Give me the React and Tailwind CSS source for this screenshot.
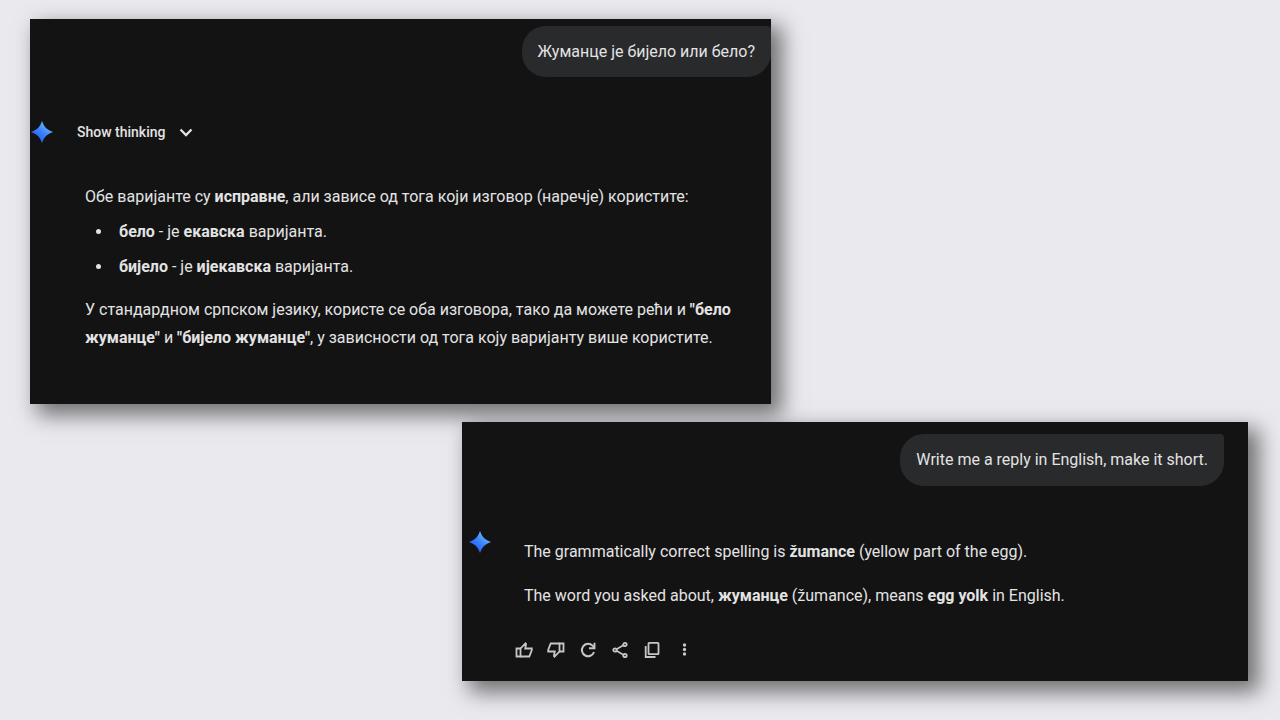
import { useState } from 'react'

function Icon({ children, className = 'w-[18px] h-[18px]' }) {
  return (
    <svg
      className={className}
      viewBox="0 0 18 18"
      fill="none"
      stroke="currentColor"
      strokeWidth="1.8"
      aria-hidden="true"
    >
      {children}
    </svg>
  )
}

function Thumb() {
  return (
    <>
      <path d="M1.500 7.500H5.500V15.500H1.500Z" />
      <path d="M5.500 7.500L10.500 2.300L11 2.800V3.500L10.200 7.500H16.800V9L14.300 15.500H5.500" />
    </>
  )
}

const ACTIONS = [
  { label: 'Good response', icon: <Thumb /> },
  { label: 'Bad response', icon: <g transform="rotate(180 9 9)"><Thumb /></g> },
  {
    label: 'Redo',
    icon: (
      <>
        <path d="M15 11A6.200 6.200 0 1 1 13.500 4.600L15 6" strokeWidth="2" />
        <path d="M15.500 1.800V7.200H10" strokeWidth="1.900" />
      </>
    ),
  },
  {
    label: 'Share',
    icon: (
      <>
        <path d="M5.500 8.200L12.300 4.300M5.500 9.800L12.300 13.700" strokeWidth="1.600" />
        <circle cx="14" cy="3.500" r="1.700" />
        <circle cx="4" cy="9" r="1.700" />
        <circle cx="14" cy="14.500" r="1.700" />
      </>
    ),
  },
  {
    label: 'Copy',
    icon: (
      <>
        <rect x="5.500" y="1.800" width="10" height="11.400" rx="0.600" />
        <path d="M2.700 5V16H12.500" />
      </>
    ),
  },
  {
    label: 'More',
    icon: (
      <g fill="currentColor" stroke="none">
        <circle cx="9.500" cy="4" r="1.700" />
        <circle cx="9.500" cy="8.500" r="1.700" />
        <circle cx="9.500" cy="13" r="1.700" />
      </g>
    ),
  },
]

function Spark({ id }) {
  return (
    <svg className="w-6 h-6 shrink-0" viewBox="0 0 24 24" aria-hidden="true">
      <defs>
        <linearGradient id={id} x1="6" y1="18" x2="17" y2="5" gradientUnits="userSpaceOnUse">
          <stop offset="0" stopColor="#2563f6" />
          <stop offset="0.5" stopColor="#3b82fb" />
          <stop offset="1" stopColor="#62b1fd" />
        </linearGradient>
      </defs>
      <path
        d="M12 1C13.200 4.500 14.500 6.500 16 8C17.500 9.500 19.500 10.800 23 12C19.500 13.200 17.500 14.500 16 16C14.500 17.500 13.200 19.500 12 23C10.800 19.500 9.500 17.500 8 16C6.500 14.500 4.500 13.200 1 12C4.500 10.800 6.500 9.500 8 8C9.500 6.500 10.800 4.500 12 1Z"
        fill={`url(#${id})`}
      />
    </svg>
  )
}

function Panel({ className, children }) {
  return (
    <section className={`w-full bg-[#131314] shadow-[9px_9px_20px_2px_rgba(0,0,0,0.52)] ${className}`}>
      {children}
    </section>
  )
}

function Bubble({ children }) {
  return (
    <p className="w-fit ml-auto px-4 py-3 rounded-3xl rounded-tr-sm bg-[#282a2c]">
      {children}
    </p>
  )
}

function Bullet({ children }) {
  return (
    <li className="flex items-center gap-[18px]">
      <span className="w-[5px] h-[5px] shrink-0 rounded-full bg-current" />
      <span>{children}</span>
    </li>
  )
}

export default function App() {
  const [open, setOpen] = useState(false)

  return (
    <main
      className="min-h-screen flex flex-col gap-[18px] pt-[19px] pb-8 pl-[30px] pr-8 bg-[#e9e9ee] text-[#e3e3e3] text-base"
      style={{ fontFamily: 'Roboto, "Noto Sans", sans-serif' }}
    >
      <Panel className="max-w-[741px] pt-[7px] pb-[52px] leading-[27px]">
        <Bubble>Жуманце је бијело или бело?</Bubble>

        <div className="flex items-center gap-[23px] mt-[43px]">
          <Spark id="spark-top" />
          <button
            onClick={() => setOpen(!open)}
            aria-expanded={open}
            className="flex items-center gap-3 text-sm leading-6 font-medium"
          >
            Show thinking
            <Icon>
              <path d="M3.500 6.500L9 12L14.500 6.500" strokeWidth="2.300" />
            </Icon>
          </button>
        </div>

        <div className="mt-[39px] pl-[55px] pr-8">
          <p>
            Обе варијанте су <b>исправне</b>, али зависе од тога који изговор (наречје) користите:
          </p>
          <ul className="mt-2 mb-4 pl-[11px] space-y-2">
            <Bullet><b>бело</b> - је <b>екавска</b> варијанта.</Bullet>
            <Bullet><b>бијело</b> - је <b>ијекавска</b> варијанта.</Bullet>
          </ul>
          <p className="leading-7">
            У стандардном српском језику, користе се оба изговора, тако да можете рећи и <b>"бело</b>{' '}
            <b>жуманце"</b> и <b>"бијело жуманце"</b>, у зависности од тога коју варијанту више користите.
          </p>
        </div>
      </Panel>

      <Panel className="max-w-[786px] self-end pt-3 pb-[15px] pr-6 pl-[6px] leading-7">
        <Bubble>Write me a reply in English, make it short.</Bubble>

        <div className="flex gap-8 mt-11">
          <Spark id="spark-bottom" />
          <div className="pt-2 space-y-4">
            <p>
              The grammatically correct spelling is <b>žumance</b> (yellow part of the egg).
            </p>
            <p>
              The word you asked about, <b>жуманце</b> (žumance), means <b>egg yolk</b> in English.
            </p>
          </div>
        </div>

        <div className="flex mt-6 ml-10">
          {ACTIONS.map(({ label, icon }) => (
            <button key={label} aria-label={label} className="w-8 h-8 flex items-center justify-center text-[#c4c7c5]">
              <Icon>{icon}</Icon>
            </button>
          ))}
        </div>
      </Panel>
    </main>
  )
}
